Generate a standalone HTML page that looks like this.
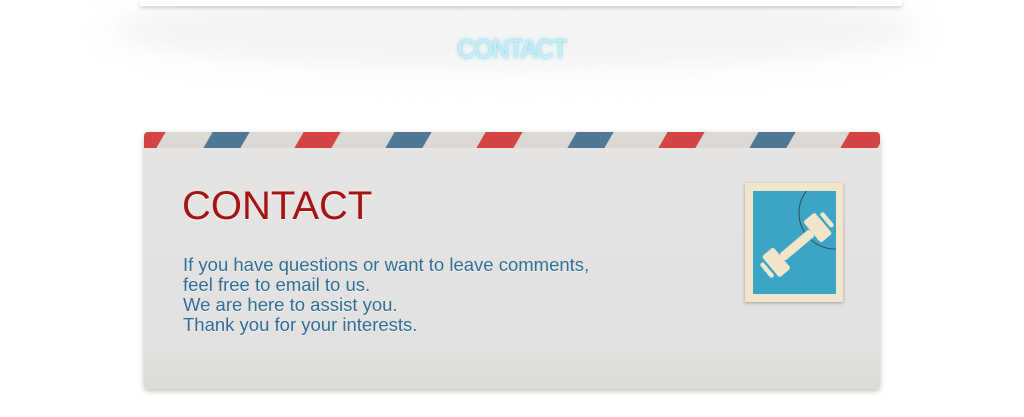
<!DOCTYPE html>
<html><head><meta charset="utf-8"><style>
*{margin:0;padding:0}
body{width:1024px;height:417px;background:#fff;position:relative;overflow:hidden;font-family:"Liberation Sans",sans-serif}
.band{position:absolute;left:110px;top:-10px;width:810px;height:80px;border-radius:50%;background:#f4f4f4;filter:blur(12px)}
.bar{position:absolute;left:140px;top:0;width:762px;height:6px;background:#fff;box-shadow:0 2px 4px rgba(0,0,0,.18)}
.h1{position:absolute;left:0;width:1024px;top:34px;text-align:center;font-size:27px;color:#c8eef6;letter-spacing:-1px;transform:scaleX(.9);text-shadow:0 0 3px #7fd2e6,0 0 6px #a8e2f0}
.card{position:absolute;left:144px;top:132px;width:736px;height:257px;background:linear-gradient(#e6e5e3,#e2e1df 85%,#dddbd8);border-radius:4px;box-shadow:0 2px 6px rgba(0,0,0,.25);overflow:hidden}
.stripes{position:absolute;left:0;top:0;width:736px;height:16px;background:#dcd9d5;overflow:hidden}
.s{position:absolute;top:0;width:37px;height:16px;transform:skewX(-30deg)}
.r{background:#d54444}.b{background:#4f7896}
.line{position:absolute;left:0;top:231px;width:736px;height:1px;background:#dedcda}
.t{position:absolute;left:38px;top:52px;font-size:40px;color:#a51414;text-shadow:0 1px 0 #fff}
.p{position:absolute;left:39px;top:123px;font-size:18.5px;line-height:20px;color:#2f6e98;text-shadow:0 1px 0 #f5f5f5}
.stamp{position:absolute;left:601px;top:51px;width:98px;height:119px;background:#f1e6cc;box-shadow:0 1px 3px rgba(0,0,0,.3)}
.stamp .in{position:absolute;left:8px;top:8px;width:83px;height:103px;background:#3ba5c6}
</style></head><body>
<div class="band"></div><div class="bar"></div>
<div class="h1">CONTACT</div>
<div class="card">
<div class="stripes">
<div class="s r" style="left:-20px"></div>
<div class="s b" style="left:64px"></div>
<div class="s r" style="left:155px"></div>
<div class="s b" style="left:246px"></div>
<div class="s r" style="left:337px"></div>
<div class="s b" style="left:428px"></div>
<div class="s r" style="left:519px"></div>
<div class="s b" style="left:610px"></div>
<div class="s r" style="left:701px"></div>
</div>
<div class="line"></div>
<div class="t">CONTACT</div>
<div class="p">If you have questions or want to leave comments,<br>feel free to email to us.<br>We are here to assist you.<br>Thank you for your interests.</div>
<div class="stamp"><div class="in">
<svg width="83" height="103" viewBox="0 0 83 103">
<circle cx="82" cy="22" r="36" fill="none" stroke="#3a4a55" stroke-width="1"/>
<g transform="translate(44,54) rotate(50) scale(1.15)" fill="#f1e6cc">
<rect x="-4" y="-17" width="8" height="34" rx="2"/>
<rect x="-12" y="-30" width="24" height="13" rx="2"/>
<rect x="-12" y="17" width="24" height="13" rx="2"/>
<rect x="-8" y="-36" width="16" height="4" rx="2"/>
<rect x="-8" y="32" width="16" height="4" rx="2"/>
</g></svg>
</div></div>
</div>
</body></html>
